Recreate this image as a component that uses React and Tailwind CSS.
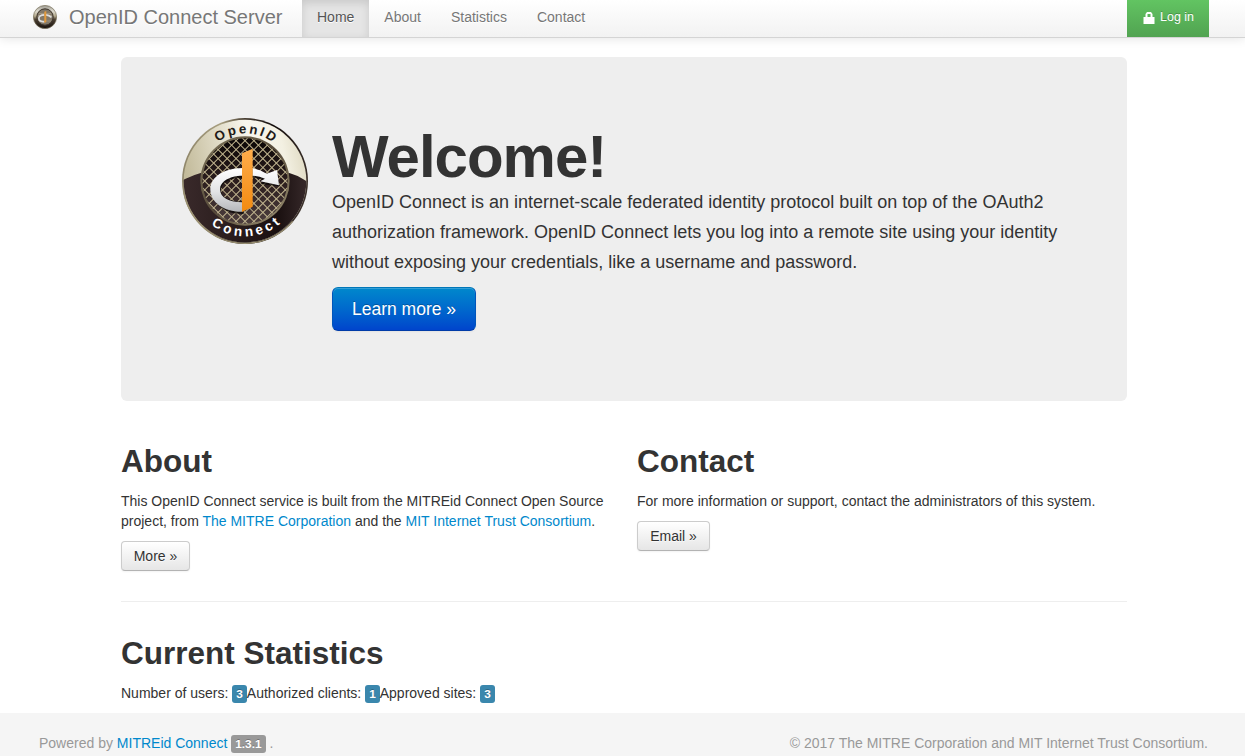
import React from 'react';

function Logo({ id, className }) {
  const u = (name) => `url(#${id}-${name})`;
  return (
    <svg viewBox="36 36 378 378" className={className} role="img" aria-label="OpenID Connect">
      <defs>
        <linearGradient id={`${id}-rim`} x1="0" y1="0.3" x2="1" y2="0.5">
          <stop offset="0" stopColor="#8d8468" />
          <stop offset="0.25" stopColor="#a89f80" />
          <stop offset="0.42" stopColor="#4a4034" />
          <stop offset="0.65" stopColor="#120c0b" />
          <stop offset="1" stopColor="#3b302a" />
        </linearGradient>
        <linearGradient id={`${id}-band`} x1="0" y1="0.35" x2="1" y2="0.15">
          <stop offset="0" stopColor="#c3bb9b" />
          <stop offset="0.3" stopColor="#e0dbc6" />
          <stop offset="0.55" stopColor="#f8f6ee" />
          <stop offset="0.8" stopColor="#f3f0e2" />
          <stop offset="1" stopColor="#dcd6bd" />
        </linearGradient>
        <linearGradient id={`${id}-dark`} x1="0" y1="0" x2="1" y2="0">
          <stop offset="0" stopColor="#3a2a2b" />
          <stop offset="0.4" stopColor="#2a1d1d" />
          <stop offset="0.75" stopColor="#1a1010" />
          <stop offset="1" stopColor="#392b2c" />
        </linearGradient>
        <linearGradient id={`${id}-core`} x1="0" y1="0" x2="0" y2="1">
          <stop offset="0" stopColor="#0b0606" />
          <stop offset="0.5" stopColor="#2b1d1d" />
          <stop offset="1" stopColor="#4d3e3e" />
        </linearGradient>
        <linearGradient id={`${id}-ring`} x1="0" y1="0" x2="1" y2="1">
          <stop offset="0" stopColor="#81785d" />
          <stop offset="0.5" stopColor="#554938" />
          <stop offset="1" stopColor="#a19677" />
        </linearGradient>
        <linearGradient id={`${id}-silver`} x1="0" y1="0" x2="0" y2="1">
          <stop offset="0" stopColor="#ffffff" />
          <stop offset="0.55" stopColor="#e2e3e5" />
          <stop offset="1" stopColor="#b5b7ba" />
        </linearGradient>
        <linearGradient id={`${id}-orange`} x1="0" y1="0" x2="0" y2="1">
          <stop offset="0" stopColor="#ffad4c" />
          <stop offset="1" stopColor="#f28a10" />
        </linearGradient>
        <clipPath id={`${id}-clip`}><circle cx="225" cy="225" r="184" /></clipPath>
        <clipPath id={`${id}-inner`}><circle cx="225" cy="225" r="128" /></clipPath>
        <path id={`${id}-top`} d="M82 225A143 143 0 0 1 368 225" />
        <path id={`${id}-bottom`} d="M59 225A166 166 0 0 0 391 225" />
      </defs>
      <circle cx="225" cy="225" r="189" fill={u('rim')} />
      <circle cx="225" cy="225" r="184" fill={u('band')} />
      <g clipPath={u('clip')}>
        <path d="M30 226L47 218Q70 207 92 201L358 201Q380 207 400 220L420 232V430H30Z" fill={u('dark')} />
      </g>
      <path d="M42 260A187 187 0 0 0 225 412Q310 410 368 346" fill="none" stroke="#9a9072" strokeWidth="4" />
      <circle cx="225" cy="225" r="134" fill={u('ring')} />
      <circle cx="225" cy="225" r="128" fill={u('core')} />
      <g clipPath={u('inner')}>
        <g transform="translate(225 225) rotate(45)" stroke="#c0b48f" strokeWidth="3">
          {[-6.5, -5.5, -4.5, -3.5, -2.5, -1.5, -0.5, 0.5, 1.5, 2.5, 3.5, 4.5, 5.5, 6.5].map((n) => (
            <path key={n} d={`M${n * 19} -135V135M-135 ${n * 19}H135`} />
          ))}
        </g>
      </g>
      <path d="M218 193C165 190 124 218 126 256C128 294 166 326 221 324V287C181 287 153 276 153 252C153 230 180 216 218 215ZM246 190Q268 192 286 205L316 196L329 241L272 234L282 223Q264 215 246 215Z" fill="#080505" opacity=".75" />
      <path d="M217 186C162 187 120 213 121 251C122 289 162 318 217 317V289C180 289 150 276 150 250C150 226 180 209 217 209ZM247 187Q270 190 290 203L321 192L327 238L271 226L285 218Q267 209 247 209Z" fill={u('silver')} />
      <path d="M216 142L248 128V302L216 318Z" fill={u('orange')} />
      <text fontFamily="'Liberation Sans', Arial, sans-serif" fontWeight="700" fontSize="40" letterSpacing="7" fill="#211a17" textAnchor="middle">
        <textPath href={`#${id}-top`} startOffset="51%">OpenID</textPath>
      </text>
      <text fontFamily="'Liberation Sans', Arial, sans-serif" fontWeight="700" fontSize="41" letterSpacing="10" fill="#fff" textAnchor="middle">
        <textPath href={`#${id}-bottom`} startOffset="51.500%">Connect</textPath>
      </text>
    </svg>
  );
}

function SmallLogo() {
  return (
    <svg viewBox="0 0 24 24" className="size-6 shrink-0" aria-hidden="true">
      <defs>
        <linearGradient id="small-ring" x1="0" y1="0" x2="0" y2="1">
          <stop offset="0" stopColor="#99968d" />
          <stop offset="0.25" stopColor="#dedbd0" />
          <stop offset="0.46" stopColor="#b5ab8f" />
          <stop offset="0.6" stopColor="#4c4032" />
          <stop offset="1" stopColor="#16100d" />
        </linearGradient>
      </defs>
      <circle cx="12" cy="12" r="11.6" fill="url(#small-ring)" stroke="#7a715a" strokeWidth=".7" />
      <circle cx="12" cy="12" r="8.2" fill="#82796a" stroke="#3c332a" strokeWidth="1" />
      <path d="M6 8.5H18M5 10.5H19M6 16H18" stroke="#a99f86" strokeWidth=".7" />
      <path d="M11.400 9.800C4 9.800 4 16.800 11.400 16.800M13 9.800Q16 10 18.500 12.400" fill="none" stroke="#dedede" strokeWidth="1.700" />
      <path d="M11.300 6.800L13.300 6V17L11.300 18Z" fill="#e39a3c" />
    </svg>
  );
}

function NavItem({ active, children }) {
  return (
    <a
      href="#"
      className={
        active
          ? 'flex h-[37px] items-center bg-[#e5e5e5] px-[15px] pb-[3px] text-[#555] shadow-[inset_0_3px_8px_rgba(0,0,0,0.125)] [text-shadow:0_1px_0_#fff]'
          : 'flex h-[37px] items-center px-[15px] pb-[3px] text-[#777] [text-shadow:0_1px_0_#fff]'
      }
    >
      {children}
    </a>
  );
}

function Button({ children, className }) {
  return (
    <a
      href="#"
      className={`flex h-[30px] items-center justify-center rounded border border-[#ccc] border-b-[#b3b3b3] bg-linear-to-b from-white to-[#e6e6e6] text-[#333] shadow-[inset_0_1px_0_rgba(255,255,255,0.2),0_1px_2px_rgba(0,0,0,0.05)] [text-shadow:0_1px_1px_rgba(255,255,255,0.75)] ${className}`}
    >
      {children}
    </a>
  );
}

function Count({ children }) {
  return (
    <span className="inline-block rounded-[3px] bg-[#3a87ad] px-1 py-0.5 align-baseline text-[11.844px] leading-[14px] font-bold text-white [text-shadow:0_-1px_0_rgba(0,0,0,0.25)]">
      {children}
    </span>
  );
}

function Heading({ children }) {
  return <h2 className="text-[31.5px] leading-10 font-bold">{children}</h2>;
}

export default function App() {
  return (
    <div className="flex h-[756px] flex-col overflow-hidden bg-white font-['Liberation_Sans',Arial,sans-serif] text-[14px] leading-5 text-[#333]">
      <header className="flex h-[38px] shrink-0 border-b border-[#d4d4d4] bg-linear-to-b from-white to-[#f2f2f2] pr-9 pl-[33px] shadow-[0_1px_10px_rgba(0,0,0,0.1)]">
        <a href="#" className="flex w-[269px] items-center gap-3 pb-[3px] text-[20px] text-[#777] [text-shadow:0_1px_0_#fff]">
          <SmallLogo />
          <span className="whitespace-nowrap">OpenID Connect Server</span>
        </a>
        <nav className="flex">
          <NavItem active>Home</NavItem>
          <NavItem>About</NavItem>
          <NavItem>Statistics</NavItem>
          <NavItem>Contact</NavItem>
        </nav>
        <a href="#" className="ml-auto flex h-[37px] w-[82px] items-center gap-[5px] bg-linear-to-b from-[#62c462] to-[#51a351] pb-[3px] pl-4 text-[12.500px] text-white [text-shadow:0_-1px_0_rgba(0,0,0,0.25)]">
          <svg viewBox="0 0 12 12" className="mt-0.5 size-3 shrink-0">
            <path d="M0.500 5H2.500V2L4 0H8L9.500 2V5H11.500V12H0.500ZM4.500 5H7.500V2H4.500Z" fill="#fff" fillRule="evenodd" />
          </svg>
          Log in
        </a>
      </header>

      <main className="mt-[19px] ml-[121px] flex w-[1006px] flex-1 flex-col">
        <section className="flex h-[344px] rounded-md bg-[#eee] pt-[60px] pr-[60px] pl-[61px]">
          <Logo id="hero" className="mt-px size-[126px] shrink-0" />
          <div className="ml-6 pt-[10px]">
            <h1 className="text-[60px] leading-[60px] font-bold tracking-[-1px]">Welcome!</h1>
            <p className="text-[18px] leading-[30px]">
              OpenID Connect is an internet-scale federated identity protocol built on top of the OAuth2<br />
              authorization framework. OpenID Connect lets you log into a remote site using your identity<br />
              without exposing your credentials, like a username and password.
            </p>
            <a href="#" className="mt-[10px] flex h-11 w-36 items-center justify-center rounded-md border border-[#0055bb] border-t-[#0077b8] border-b-[#003ba8] bg-linear-to-b from-[#0088cc] to-[#0044cc] text-[17.5px] text-white shadow-[inset_0_1px_0_rgba(255,255,255,0.2),0_1px_2px_rgba(0,0,0,0.05)] [text-shadow:0_-1px_0_rgba(0,0,0,0.25)]">
              Learn more »
            </a>
          </div>
        </section>

        <div className="mt-10 flex h-40 gap-[26px]">
          <section className="w-[490px]">
            <Heading>About</Heading>
            <p className="my-[10px]">
              This OpenID Connect service is built from the MITREid Connect Open Source<br />
              project, from <a href="#" className="text-[#0088cc]">The MITRE Corporation</a> and the{' '}
              <a href="#" className="text-[#0088cc]">MIT Internet Trust Consortium</a>.
            </p>
            <Button className="w-[69px]">More »</Button>
          </section>
          <section className="w-[490px]">
            <Heading>Contact</Heading>
            <p className="my-[10px]">For more information or support, contact the administrators of this system.</p>
            <Button className="w-[73px]">Email »</Button>
          </section>
        </div>

        <section className="border-t border-[#eee] pt-[31px]">
          <Heading>Current Statistics</Heading>
          <p className="mt-[10px] whitespace-nowrap">
            Number of users: <Count>3</Count>Authorized clients: <Count>1</Count>Approved sites: <Count>3</Count>
          </p>
        </section>
      </main>

      <footer className="flex h-[43px] shrink-0 justify-between bg-[#f5f5f5] pt-5 pr-[37px] pl-[39px] text-[#999]">
        <p>
          Powered by <a href="#" className="text-[#0088cc]">MITREid Connect</a>{' '}
          <span className="inline-block rounded-[3px] bg-[#999] px-1 py-0.5 align-baseline text-[11.844px] leading-[14px] font-bold text-white [text-shadow:0_-1px_0_rgba(0,0,0,0.25)]">1.3.1</span> .
        </p>
        <p>© 2017 The MITRE Corporation and MIT Internet Trust Consortium.</p>
      </footer>
    </div>
  );
}
